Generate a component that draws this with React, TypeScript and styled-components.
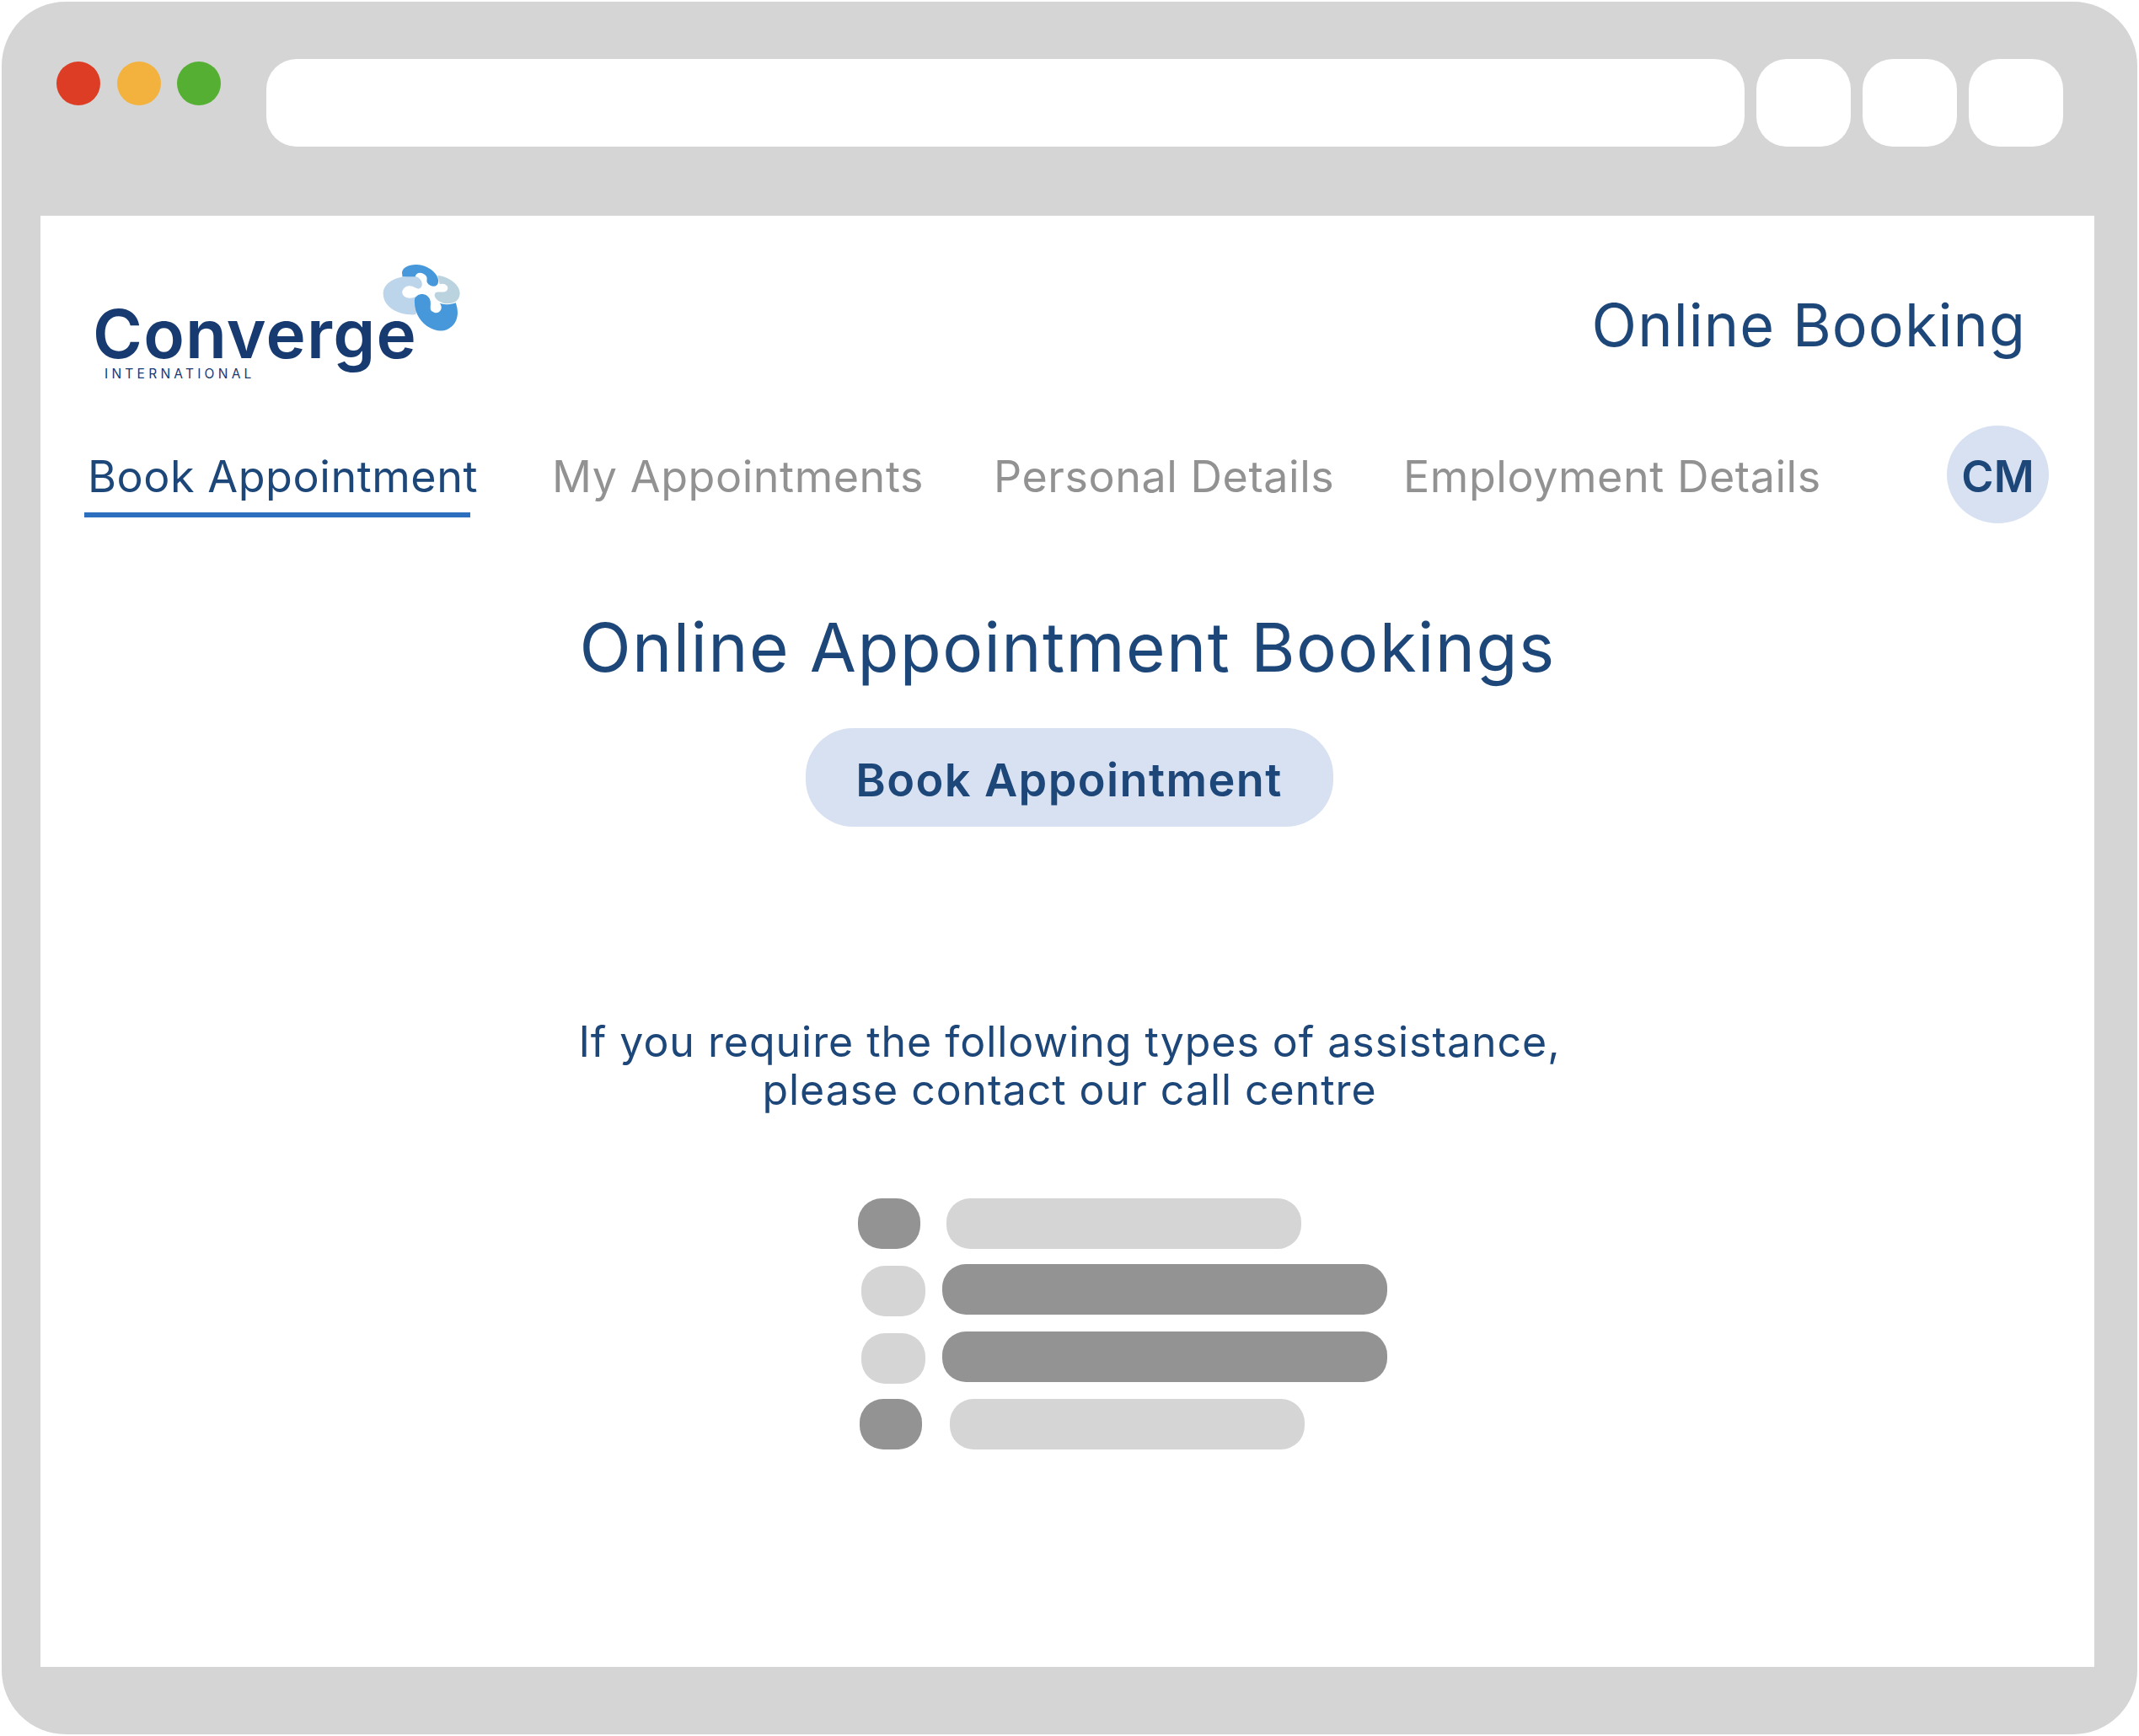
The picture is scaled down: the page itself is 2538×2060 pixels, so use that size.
import React from "react";
import styled, { createGlobalStyle } from "styled-components";

const GlobalStyle = createGlobalStyle`
  html, body {
    margin: 0;
    padding: 0;
    background: #fff;
  }
  #root {
    padding: 2px;
    font-family: "Inter", "Liberation Sans", sans-serif;
  }
`;

const Frame = styled.div`
  width: 2534px;
  height: 2056px;
  box-sizing: border-box;
  background: #d5d5d5;
  border-radius: 76px;
  padding: 0 51px 80px 46px;
  display: flex;
  flex-direction: column;
`;

const BrowserBar = styled.div`
  height: 254px;
  flex: none;
  display: flex;
  align-items: flex-start;
`;

const Dots = styled.div`
  display: flex;
  gap: 19.5px;
  padding: 71px 0 0 19px;
  width: 268px;
  box-sizing: border-box;
`;

const Dot = styled.span<{ $color: string }>`
  width: 52px;
  height: 52px;
  border-radius: 50%;
  background: ${(p) => p.$color};
`;

const AddressBar = styled.div`
  width: 1754px;
  height: 104px;
  margin-top: 68px;
  background: #fff;
  border-radius: 36px;
`;

const BarButton = styled.div`
  width: 112px;
  height: 104px;
  margin: 68px 0 0 14px;
  background: #fff;
  border-radius: 36px;
`;

const Content = styled.main`
  flex: 1;
  background: #fff;
  display: flex;
  flex-direction: column;
  align-items: center;
`;

const Header = styled.header`
  align-self: stretch;
  height: 249px;
  box-sizing: border-box;
  padding: 52px 81px 0 62px;
  display: flex;
  justify-content: space-between;
`;

const Logo = styled.div`
  position: relative;
  width: 420px;
  color: #173a70;
`;

const Wordmark = styled.div`
  font-size: 80px;
  line-height: 76px;
  margin-top: 50px;
  font-weight: 600;
  letter-spacing: 1.2px;
`;

const Tagline = styled.div`
  font-size: 15.5px;
  line-height: 16px;
  letter-spacing: 4.25px;
  margin: 2px 0 0 14px;
`;

const LogoMark = styled.svg`
  position: absolute;
  left: 320px;
  top: -8px;
  width: 130px;
  height: 110px;
`;

const SiteTitle = styled.div`
  color: #1d4679;
  font-size: 70px;
  line-height: 80px;
  margin-top: 38px;
  letter-spacing: 1.1px;
  white-space: nowrap;
`;

const Nav = styled.nav`
  align-self: stretch;
  height: 130px;
  box-sizing: border-box;
  padding-left: 56px;
  display: grid;
  grid-template-columns: 551px 524px 486px 645px 121px;
  align-items: start;
`;

const NavItem = styled.div<{ $active?: boolean }>`
  color: ${(p) => (p.$active ? "#1d4679" : "#929292")};
  font-size: 52px;
  line-height: 64px;
  letter-spacing: 0.55px;
  margin-top: 29px;
  white-space: nowrap;
`;

const Underline = styled.div`
  width: 458px;
  height: 6px;
  margin: 10px 0 0 -4px;
  background: #2c6fbe;
`;

const Avatar = styled.div`
  width: 121px;
  height: 116px;
  box-sizing: border-box;
  padding-top: 4px;
  border-radius: 50%;
  background: #d8e1f1;
  color: #1d4679;
  font-size: 52px;
  font-weight: 600;
  display: flex;
  align-items: center;
  justify-content: center;
`;

const Heading = styled.h1`
  margin: 0;
  color: #1d4679;
  font-size: 80px;
  line-height: 100px;
  font-weight: 400;
  letter-spacing: 1.4px;
  margin-top: 83px;
  white-space: nowrap;
`;

const BookButton = styled.button`
  width: 626px;
  height: 117px;
  margin: 46px 0 0 4px;
  padding: 5px 0 0;
  border: 0;
  border-radius: 56px;
  background: #d8e1f1;
  color: #1d4679;
  font-family: inherit;
  font-size: 54px;
  font-weight: 600;
  letter-spacing: 1.4px;
`;

const Notice = styled.p`
  margin: 227px 0 0 5px;
  color: #1d4679;
  font-size: 50px;
  line-height: 57px;
  letter-spacing: 0.96px;
  text-align: center;
`;

const List = styled.div`
  align-self: stretch;
  margin-top: 100px;
  display: flex;
  flex-direction: column;
`;

const ListRow = styled.div<{ $indent: number; $gap: number; $top: number }>`
  display: flex;
  align-items: flex-start;
  padding-left: ${(p) => p.$indent}px;
  gap: ${(p) => p.$gap}px;
  margin-top: ${(p) => p.$top}px;
`;

const Pill = styled.span<{ $dark?: boolean; $width: number; $shift?: number }>`
  width: ${(p) => p.$width}px;
  height: 60px;
  margin-top: ${(p) => p.$shift ?? 0}px;
  border-radius: 28px;
  background: ${(p) => (p.$dark ? "#939393" : "#d5d5d5")};
`;

const rows = [
  { indent: 970, gap: 31, top: 0, pillDark: true, pillWidth: 74, barWidth: 421, shift: 0 },
  { indent: 974, gap: 20, top: 18, pillDark: false, pillWidth: 76, barWidth: 528, shift: 2 },
  { indent: 974, gap: 20, top: 18, pillDark: false, pillWidth: 76, barWidth: 528, shift: 2 },
  { indent: 972, gap: 33, top: 18, pillDark: true, pillWidth: 74, barWidth: 421, shift: 0 },
];

export default function App() {
  return (
    <>
      <GlobalStyle />
      <Frame>
        <BrowserBar>
          <Dots>
            <Dot $color="#dc3d24" />
            <Dot $color="#f3b23e" />
            <Dot $color="#55af33" />
          </Dots>
          <AddressBar />
          <BarButton />
          <BarButton />
          <BarButton />
        </BrowserBar>
        <Content>
          <Header>
            <Logo>
              <Wordmark>Converge</Wordmark>
              <Tagline>INTERNATIONAL</Tagline>
              <LogoMark viewBox="0 0 390 330">
                <path
                  fill="#bdd5ea"
                  d="M190 84C125 78 74 105 74 145C74 195 130 224 190 220L205 150C190 155 175 165 158 160C132 150 140 122 165 118C180 116 190 128 200 128C220 124 216 92 190 84Z"
                />
                <path
                  fill="#bbd3df"
                  d="M268 80C310 85 348 115 347 145C345 175 320 184 290 180C265 172 250 155 260 142C270 135 290 145 300 135C312 122 295 105 275 112Z"
                />
                <path
                  fill="#4698db"
                  d="M142 78C135 55 165 40 195 42C240 45 275 80 270 105C268 122 245 125 232 108C225 100 235 90 225 80C210 65 190 70 188 85C170 85 155 85 142 85Z"
                />
                <path
                  fill="#4698db"
                  d="M186 165C195 140 235 140 242 172C245 195 235 205 255 212C275 220 290 195 275 180C300 186 320 184 332 178C346 215 340 255 300 274C255 292 180 245 186 165Z"
                />
              </LogoMark>
            </Logo>
            <SiteTitle>Online Booking</SiteTitle>
          </Header>
          <Nav>
            <div>
              <NavItem $active>Book Appointment</NavItem>
              <Underline />
            </div>
            <NavItem>My Appointments</NavItem>
            <NavItem>Personal Details</NavItem>
            <NavItem>Employment Details</NavItem>
            <Avatar>CM</Avatar>
          </Nav>
          <Heading>Online Appointment Bookings</Heading>
          <BookButton>Book Appointment</BookButton>
          <Notice>
            If you require the following types of assistance,
            <br />
            please contact our call centre
          </Notice>
          <List>
            {rows.map((row, i) => (
              <ListRow key={i} $indent={row.indent} $gap={row.gap} $top={row.top}>
                <Pill $dark={row.pillDark} $width={row.pillWidth} $shift={row.shift} />
                <Pill $dark={!row.pillDark} $width={row.barWidth} />
              </ListRow>
            ))}
          </List>
        </Content>
      </Frame>
    </>
  );
}
